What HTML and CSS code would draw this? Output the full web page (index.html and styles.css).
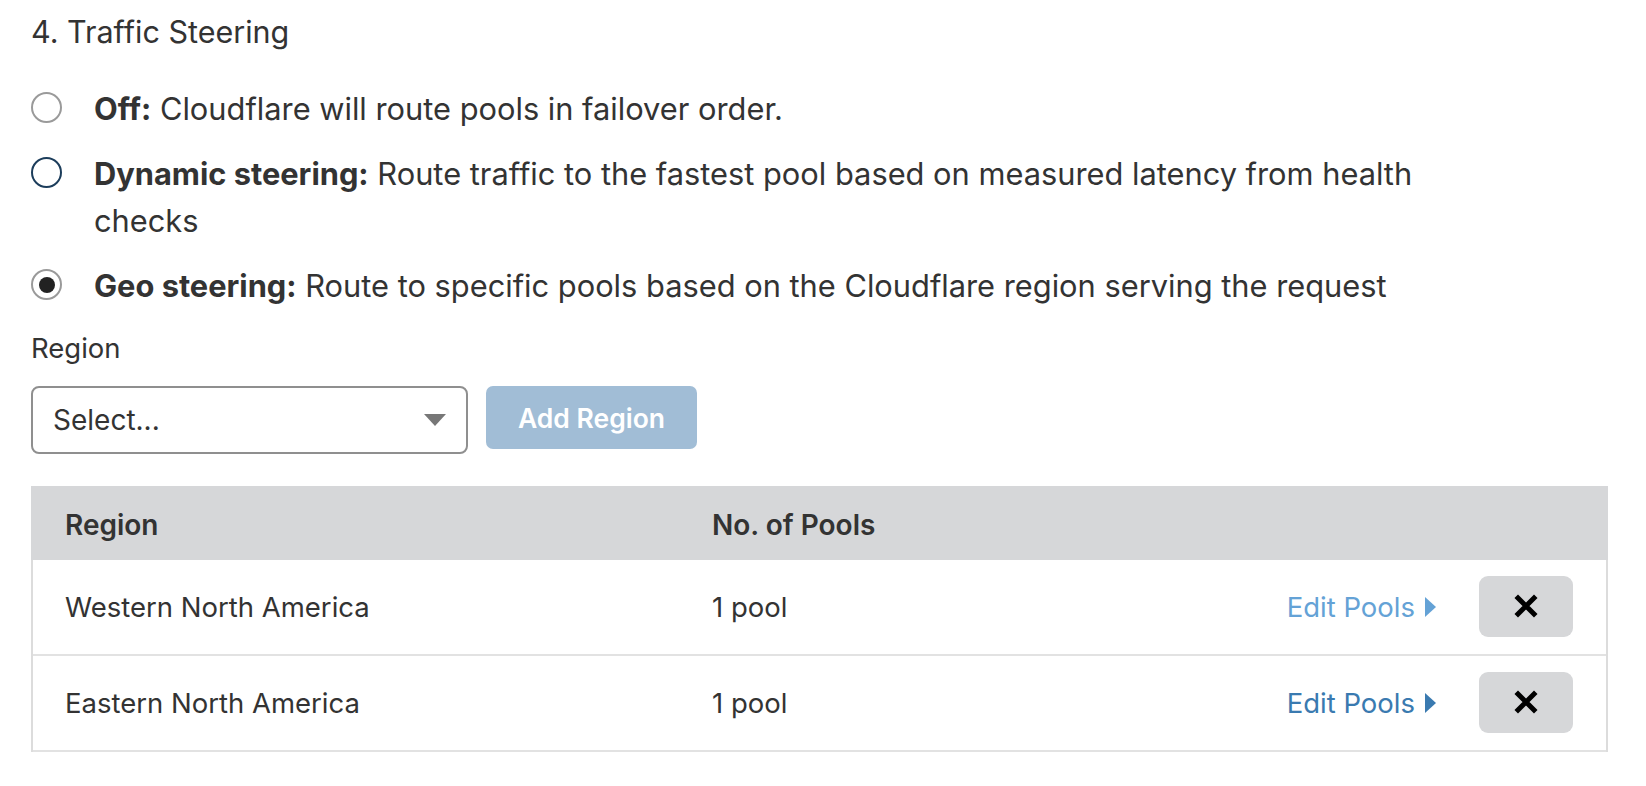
FILE: index.html
```html
<!DOCTYPE html>
<html>
<head>
<meta charset="utf-8">
<link rel="stylesheet" href="styles.css">
</head>
<body>
<div class="page">
  <h2 class="title">4. Traffic Steering</h2>
  <div class="options">
    <div class="option">
      <span class="radio radio-off"></span>
      <p class="label"><b>Off:</b> Cloudflare will route pools in failover order.</p>
    </div>
    <div class="option">
      <span class="radio radio-focus"></span>
      <p class="label"><b>Dynamic steering:</b> Route traffic to the fastest pool based on measured latency from health checks</p>
    </div>
    <div class="option">
      <span class="radio radio-on"><span class="dot"></span></span>
      <p class="label"><b>Geo steering:</b> Route to specific pools based on the Cloudflare region serving the request</p>
    </div>
  </div>
  <div class="field-label">Region</div>
  <div class="controls">
    <div class="select">
      <span>Select...</span>
      <span class="caret"></span>
    </div>
    <button class="add-btn">Add Region</button>
  </div>
  <div class="table">
    <div class="row head">
      <div class="c1">Region</div>
      <div class="c2">No. of Pools</div>
      <div class="c3"></div>
    </div>
    <div class="row">
      <div class="c1">Western North America</div>
      <div class="c2">1 pool</div>
      <div class="c3">
        <a class="edit light">Edit Pools<span class="tri"></span></a>
        <button class="x-btn">
          <svg width="24" height="24" viewBox="0 0 24 24"><path d="M4 4 L20 20 M20 4 L4 20" stroke="#000" stroke-width="5" stroke-linecap="square"/></svg>
        </button>
      </div>
    </div>
    <div class="row">
      <div class="c1">Eastern North America</div>
      <div class="c2">1 pool</div>
      <div class="c3">
        <a class="edit">Edit Pools<span class="tri"></span></a>
        <button class="x-btn">
          <svg width="24" height="24" viewBox="0 0 24 24"><path d="M4 4 L20 20 M20 4 L4 20" stroke="#000" stroke-width="5" stroke-linecap="square"/></svg>
        </button>
      </div>
    </div>
  </div>
</div>
</body>
</html>
```
FILE: styles.css
```css
* { box-sizing: border-box; }
body {
  margin: 0;
  background: #fff;
  font-family: Inter, "Noto Sans", "Liberation Sans", sans-serif;
  color: #333;
}
.page {
  padding: 10px 0 0 31px;
}
.title {
  margin: 0;
  font-size: 30.5px;
  font-weight: 400;
  line-height: 44px;
  color: #333;
}
.options {
  margin-top: 31px;
  display: flex;
  flex-direction: column;
  gap: 18px;
}
.option {
  display: flex;
  align-items: flex-start;
}
.radio {
  flex: none;
  width: 31px;
  height: 31px;
  border-radius: 50%;
  border: 2px solid #9a9a9a;
  margin-top: 7px;
  display: flex;
  align-items: center;
  justify-content: center;
}
.radio-focus { border-color: #1c3d5b; }
.dot {
  width: 16px;
  height: 16px;
  border-radius: 50%;
  background: #222;
}
.label {
  margin: 0 0 0 32px;
  font-size: 30.8px;
  line-height: 47px;
  max-width: 1390px;
}
.label b { font-weight: 700; color: #333; }
.field-label {
  margin-top: 23px;
  font-size: 27.5px;
  line-height: 32px;
}
.controls {
  margin-top: 22px;
  display: flex;
  gap: 18px;
  align-items: flex-start;
}
.select {
  width: 437px;
  height: 68px;
  border: 2px solid #8f8f8f;
  border-radius: 8px;
  display: flex;
  align-items: center;
  justify-content: space-between;
  padding: 0 20px 0 20px;
  font-size: 28px;
  color: #333;
}
.caret {
  width: 0;
  height: 0;
  border-left: 11px solid transparent;
  border-right: 11px solid transparent;
  border-top: 12px solid #777;
}
.add-btn {
  height: 63px;
  width: 211px;
  border: 0;
  border-radius: 7px;
  background: #a1bdd6;
  color: #fff;
  font-family: inherit;
  font-size: 26.5px;
  font-weight: 600;
}
.table {
  margin-top: 32px;
  width: 1577px;
  border-left: 2px solid #dcdcdc;
  border-right: 2px solid #dcdcdc;
}
.row {
  display: flex;
  align-items: center;
  height: 96px;
  border-bottom: 2px solid #e2e2e2;
  font-size: 27.5px;
}
.row.head {
  height: 74px;
  background: #d6d7d9;
  border-bottom: 0;
  font-size: 28px;
  font-weight: 600;
  margin-left: -2px;
  margin-right: -2px;
  padding-left: 2px;
  padding-top: 4px;
}
.c1 { width: 679px; padding-left: 32px; }
.c2 { flex: 1; }
.c3 {
  display: flex;
  align-items: center;
  gap: 43px;
  padding-right: 33px;
}
.edit {
  display: flex;
  align-items: center;
  color: #3a7ab0;
  font-size: 27.5px;
}
.edit.light { color: #64a2d6; }
.tri {
  margin-left: 10px;
  width: 0;
  height: 0;
  border-top: 10px solid transparent;
  border-bottom: 10px solid transparent;
  border-left: 11px solid currentColor;
}
.x-btn {
  width: 94px;
  height: 61px;
  border: 0;
  border-radius: 9px;
  background: #d6d7d9;
  display: flex;
  align-items: center;
  justify-content: center;
  margin-bottom: 2px;
}
```
